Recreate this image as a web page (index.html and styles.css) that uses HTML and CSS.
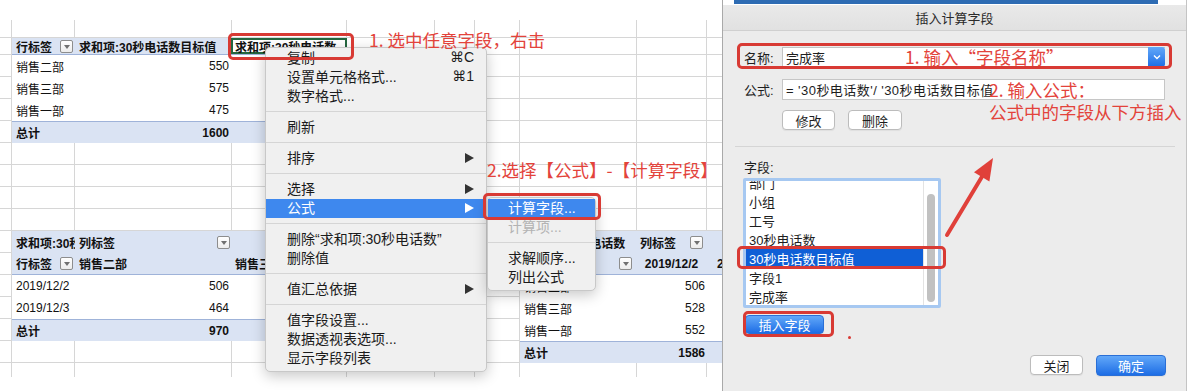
FILE: index.html
```html
<!DOCTYPE html>
<html lang="zh-CN">
<head>
<meta charset="utf-8">
<title>插入计算字段</title>
<link rel="stylesheet" href="styles.css">
</head>
<body>
<div class="page">
  <div class="left">
    <div class="sheet">
      <div class="pv pv1">
        <div class="row head last h17">
          <div class="c w63 b">行标签<span class="dd"></span></div>
          <div class="c w156 b">求和项:30秒电话数目标值</div>
          <div class="c w116 b sel">求和项:30秒电话数</div>
        </div>
        <div class="row"><div class="c w63">销售二部</div><div class="c w156 num">550</div><div class="c w116 num"></div></div>
        <div class="row"><div class="c w63">销售三部</div><div class="c w156 num">575</div><div class="c w116 num"></div></div>
        <div class="row"><div class="c w63">销售一部</div><div class="c w156 num">475</div><div class="c w116 num"></div></div>
        <div class="row total"><div class="c w63">总计</div><div class="c w156 num">1600</div><div class="c w116 num"></div></div>
      </div>

      <div class="pv pv2">
        <div class="row head">
          <div class="c w63 b">求和项:30秒电话数</div>
          <div class="c w156 b tight">列标签<span class="dd"></span></div>
          <div class="c w116"></div>
        </div>
        <div class="row head last">
          <div class="c w63 b">行标签<span class="dd"></span></div>
          <div class="c w156 b">销售二部</div>
          <div class="c w116 b">销售三部</div>
        </div>
        <div class="row"><div class="c w63">2019/12/2</div><div class="c w156 num">506</div><div class="c w116 num"></div></div>
        <div class="row"><div class="c w63">2019/12/3</div><div class="c w156 num">464</div><div class="c w116 num"></div></div>
        <div class="row total"><div class="c w63">总计</div><div class="c w156 num">970</div><div class="c w116 num"></div></div>
      </div>

      <div class="pv pv3">
        <div class="row head">
          <div class="c w116 b">求和项:30秒电话数</div>
          <div class="c w71 b loose">列标签<span class="dd"></span></div>
          <div class="c w15"></div>
        </div>
        <div class="row head last">
          <div class="c w116 b loose">行标签<span class="dd"></span></div>
          <div class="c w71 b ctr">2019/12/2</div>
          <div class="c w15 b clip">2019/12/3</div>
        </div>
        <div class="row"><div class="c w116">销售二部</div><div class="c w71 num">506</div><div class="c w15"></div></div>
        <div class="row"><div class="c w116">销售三部</div><div class="c w71 num">528</div><div class="c w15"></div></div>
        <div class="row"><div class="c w116">销售一部</div><div class="c w71 num">552</div><div class="c w15"></div></div>
        <div class="row total"><div class="c w116">总计</div><div class="c w71 num">1586</div><div class="c w15"></div></div>
      </div>
    </div>

    <div class="menu ctx">
      <div class="mi">复制<span class="k">⌘C</span></div>
      <div class="mi">设置单元格格式...<span class="k">⌘1</span></div>
      <div class="mi">数字格式...</div>
      <div class="msep"></div>
      <div class="mi">刷新</div>
      <div class="msep"></div>
      <div class="mi">排序<span class="arr"></span></div>
      <div class="msep"></div>
      <div class="mi">选择<span class="arr"></span></div>
      <div class="mi on">公式<span class="arr"></span></div>
      <div class="msep"></div>
      <div class="mi">删除“求和项:30秒电话数”</div>
      <div class="mi">删除值</div>
      <div class="msep"></div>
      <div class="mi">值汇总依据<span class="arr"></span></div>
      <div class="msep"></div>
      <div class="mi">值字段设置...</div>
      <div class="mi">数据透视表选项...</div>
      <div class="mi">显示字段列表</div>
    </div>

    <div class="menu sub">
      <div class="mi on">计算字段...</div>
      <div class="mi off">计算项...</div>
      <div class="msep"></div>
      <div class="mi">求解顺序...</div>
      <div class="mi">列出公式</div>
    </div>

    <div class="note n1">1. 选中任意字段，右击</div>
    <div class="note n2">2.选择【公式】-【计算字段】</div>
    <div class="hl h-cell"></div>
    <div class="hl h-sub"></div>
  </div>

  <div class="dialog">
    <div class="topstrip"><div class="bluebar"></div></div>
    <div class="titlebar">插入计算字段</div>
    <div class="dbody">
      <div class="frow name-row">
        <span class="lbl">名称:</span>
        <div class="combo">
          <span class="val">完成率</span>
          <span class="cbtn"><svg width="8" height="6" viewBox="0 0 8 6"><polyline points="1,1.5 4,4.5 7,1.5" fill="none" stroke="#fff" stroke-width="1.4"/></svg></span>
        </div>
      </div>
      <div class="frow formula-row">
        <span class="lbl">公式:</span>
        <div class="field">= '30秒电话数'/ '30秒电话数目标值</div>
      </div>
      <div class="btnrow">
        <button class="btn w53">修改</button>
        <button class="btn w54">删除</button>
      </div>
      <div class="dsep"></div>
      <div class="flabel">字段:</div>
      <div class="list">
        <div class="items">
          <div class="it">部门</div>
          <div class="it">小组</div>
          <div class="it">工号</div>
          <div class="it">30秒电话数</div>
          <div class="it on">30秒电话数目标值</div>
          <div class="it">字段1</div>
          <div class="it">完成率</div>
        </div>
        <div class="track"><div class="thumb"></div></div>
      </div>
      <button class="btn primary insert">插入字段</button>
      <div class="footer">
        <button class="btn w53">关闭</button>
        <button class="btn primary ok">确定</button>
      </div>
    </div>

    <div class="hl d-name"></div>
    <div class="hl d-sel"></div>
    <div class="hl d-ins"></div>
    <div class="dot"></div>
    <div class="note d1">1. 输入“字段名称”</div>
    <div class="note d2">2. 输入公式：<br>公式中的字段从下方插入</div>
    <svg class="arrow" width="70" height="100" viewBox="0 0 70 100">
      <line x1="14" y1="85" x2="50" y2="25" stroke="#e0403a" stroke-width="4" stroke-linecap="round"/>
      <polygon points="60,8 56.4,31.5 41,22.3" fill="#e0403a"/>
    </svg>
  </div>
  <div class="gap"></div>
</div>
</body>
</html>
```

FILE: styles.css
```css
* { box-sizing: border-box; }
html, body { margin: 0; padding: 0; background: #fff; }
body { font-family: "Liberation Sans", "Noto Sans CJK SC", sans-serif; color: #111; }

.page { display: flex; width: 1201px; height: 391px; overflow: hidden; background: #fff; }
.left { position: relative; flex: none; width: 722px; height: 391px; }

/* spreadsheet */
.sheet {
  margin-top: 20px;
  width: 722px;
  height: 357px;
  display: grid;
  grid-template-columns: 12px 63px 156px 116px 88px 40px 45px 116px 71px 15px;
  grid-template-rows: 18px 17px repeat(14, 22px) 14px;
  background-image:
    linear-gradient(#d6d6d6, #d6d6d6), linear-gradient(#d6d6d6, #d6d6d6),
    linear-gradient(#d6d6d6, #d6d6d6), linear-gradient(#d6d6d6, #d6d6d6),
    linear-gradient(#d6d6d6, #d6d6d6), linear-gradient(#d6d6d6, #d6d6d6),
    linear-gradient(#d6d6d6, #d6d6d6), linear-gradient(#d6d6d6, #d6d6d6),
    linear-gradient(#d6d6d6, #d6d6d6),
    linear-gradient(#d6d6d6, #d6d6d6), linear-gradient(#d6d6d6, #d6d6d6),
    repeating-linear-gradient(to bottom, transparent 0 21px, #d6d6d6 21px 22px);
  background-size:
    1px 100%, 1px 100%, 1px 100%, 1px 100%, 1px 100%, 1px 100%, 1px 100%, 1px 100%, 1px 100%,
    100% 1px, 100% 1px, 100% 308px;
  background-position:
    11px 0, 74px 0, 231px 0, 346px 0, 434px 0, 474px 0, 519px 0, 636px 0, 706px 0,
    0 17px, 0 34px, 0 35px;
  background-repeat: no-repeat;
}

.pv { display: flex; flex-direction: column; background: #fff; font-size: 12px; }
.pv1 { grid-column: 2 / 5; grid-row: 2 / 7; }
.pv2 { grid-column: 2 / 5; grid-row: 11 / 16; }
.pv3 { grid-column: 8 / 11; grid-row: 11 / 17; }

.row { display: flex; flex: none; height: 22px; }
.row.h17 { height: 17px; }
.head { background: #dae3f3; }
.head.last { border-bottom: 1px solid #9fb3d9; }
.total { background: #dae3f3; border-top: 1px solid #9fb3d9; font-weight: 700; }

.c { flex: none; display: flex; align-items: center; padding: 0 2px 0 4px; overflow: hidden; white-space: nowrap; }
.b { font-weight: 700; }
.num { justify-content: flex-end; }
.ctr { justify-content: center; padding: 0; }
.tight { padding-right: 1px; }
.loose { padding-right: 4px; }
.clip { padding-left: 10px; }
.w63 { width: 63px; }
.w156 { width: 156px; }
.w116 { width: 116px; }
.w71 { width: 71px; }
.w15 { width: 15px; }

.sel { background: #fff; box-shadow: inset 0 0 0 2px #24673f; }

.dd {
  flex: none;
  position: relative;
  width: 13px;
  height: 13px;
  margin-left: auto;
  border: 1px solid #8d8d8d;
  border-radius: 2px;
  background: linear-gradient(#fff, #ececec);
}
.dd::after {
  content: "";
  position: absolute;
  left: 2.5px;
  top: 4px;
  border-left: 3.5px solid transparent;
  border-right: 3.5px solid transparent;
  border-top: 4px solid #707070;
}

/* context menu */
.menu {
  position: absolute;
  background: #f0f0f0;
  border: 1px solid #c8c8c8;
  border-radius: 5px;
  box-shadow: 0 4px 14px rgba(0, 0, 0, .22);
  padding: 1px 0 3px;
  font-size: 14px;
  color: #1b1b1b;
  z-index: 2;
}
.ctx { left: 265px; top: 47px; width: 222px; }
.sub { left: 487px; top: 197px; width: 109px; z-index: 3; }
.mi { height: 19px; display: flex; align-items: center; padding: 0 12px 3px 21px; white-space: nowrap; }
.sub .mi { padding-left: 20px; }
.mi.on { background: #3e88ee; color: #fff; }
.mi.off { color: #b3b3b3; }
.mi .k { margin-left: auto; font-family: "Liberation Sans", "DejaVu Sans", sans-serif; }
.mi .arr {
  margin-left: auto;
  margin-top: 2px;
  width: 0;
  height: 0;
  border-left: 9px solid #333;
  border-top: 5.5px solid transparent;
  border-bottom: 5.5px solid transparent;
}
.mi.on .arr { border-left-color: #fff; }
.msep { height: 1px; background: #d5d5d5; margin: 5px 0 6px; }

/* annotations */
.note {
  position: absolute;
  color: #e3433b;
  font-family: "Noto Sans CJK SC", sans-serif;
  font-size: 17.5px;
  line-height: 22px;
  white-space: nowrap;
  z-index: 4;
}
.n1 { left: 369px; top: 29px; }
.n2 { left: 487px; top: 159px; }
.hl { position: absolute; border: 3px solid #d83a34; border-radius: 5px; z-index: 5; }
.h-cell { left: 228px; top: 33px; width: 126px; height: 27px; }
.h-sub { left: 483px; top: 193px; width: 118px; height: 27px; }

/* dialog */
.dialog {
  position: relative;
  flex: none;
  width: 465px;
  height: 391px;
  background: #ececec;
  border-left: 1px solid #a9a9a9;
  border-right: 1px solid #c4c4c4;
  display: flex;
  flex-direction: column;
  font-size: 13px;
  color: #1e1e1e;
}
.topstrip { flex: none; height: 5px; background: #fff; padding-left: 11px; }
.bluebar { width: 424px; height: 4px; background: #2d6bb3; }
.titlebar {
  flex: none;
  height: 26px;
  display: flex;
  align-items: center;
  justify-content: center;
  background: linear-gradient(#e9e9e9, #e1e1e1);
  border-bottom: 1px solid #d0d0d0;
  color: #2a2a2a;
}
.dbody { display: flex; flex-direction: column; align-items: flex-start; padding: 0 21px; }
.frow { width: 100%; display: flex; align-items: center; }
.name-row { margin-top: 16px; height: 20px; }
.formula-row { margin-top: 12px; height: 21px; }
.lbl { flex: none; width: 38px; }
.combo {
  flex: 1;
  height: 20px;
  display: flex;
  align-items: center;
  background: #fff;
  border: 1px solid #c3c3c3;
  border-right: 0;
}
.val { padding-left: 3px; }
.cbtn {
  margin-left: auto;
  align-self: stretch;
  margin-top: -1px;
  margin-bottom: -1px;
  width: 17px;
  display: flex;
  align-items: center;
  justify-content: center;
  background: linear-gradient(#62a8f9, #1d6de5);
  border-radius: 0 3px 3px 0;
}
.field {
  flex: 1;
  height: 21px;
  display: flex;
  align-items: center;
  padding-left: 3px;
  background: #fff;
  border: 1px solid #c6c6c6;
  white-space: nowrap;
  overflow: hidden;
  letter-spacing: 0.45px;
}
.btnrow { margin-top: 10px; margin-left: 38px; display: flex; gap: 13px; }
.btn {
  height: 20px;
  padding: 0;
  display: flex;
  align-items: center;
  justify-content: center;
  background: #fff;
  border: 1px solid #bcbcbc;
  border-radius: 4px;
  font: inherit;
  font-size: 13px;
  color: #1e1e1e;
  box-shadow: 0 1px 1px rgba(0, 0, 0, .06);
}
.w53 { width: 53px; }
.w54 { width: 54px; }
.primary { background: linear-gradient(#62a8f9, #1d6de5); border-color: #2a6fd6; color: #fff; }
.dsep { align-self: stretch; margin: 16px -10px 0 -9px; height: 1px; background: #d5d5d5; }
.flabel { margin-top: 13px; height: 16px; line-height: 16px; }
.list {
  margin-top: 2px;
  margin-left: -1px;
  width: 198px;
  height: 130px;
  border: 3px solid #a6c8f1;
  border-radius: 2px;
  background: #fff;
  display: flex;
  overflow: hidden;
}
.items { flex: 1; margin-top: -8px; }
.it { height: 19px; display: flex; align-items: center; padding-left: 3px; white-space: nowrap; }
.it.on { background: #0f5fd6; color: #fff; }
.track { flex: none; width: 15px; border-left: 1px solid #e3e3e3; padding: 13px 0 0 3px; }
.thumb { width: 8px; height: 108px; border-radius: 4px; background: #c1c1c1; }
.insert { margin-top: 7px; margin-left: 1px; width: 79px; height: 19px; }
.footer { align-self: stretch; margin-top: 21px; margin-right: -1px; display: flex; justify-content: flex-end; gap: 13px; }
.ok { width: 70px; height: 21px; }

.d-name { left: 14px; top: 43px; width: 435px; height: 26px; }
.d-sel { left: 14px; top: 246px; width: 209px; height: 23px; }
.d-ins { left: 20px; top: 311px; width: 91px; height: 26px; }
.dot { position: absolute; left: 125px; top: 336px; width: 3px; height: 3px; border-radius: 50%; background: #d83a34; }
.d1 { left: 182px; top: 46px; }
.d2 { left: 266px; top: 79px; }
.arrow { position: absolute; left: 210px; top: 150px; z-index: 4; }

.gap { flex: 1; background: #fff; }
```
